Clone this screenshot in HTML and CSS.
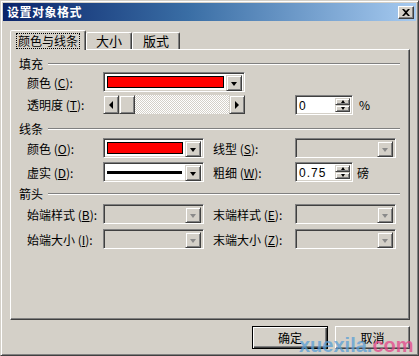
FILE: index.html
```html
<!DOCTYPE html>
<html lang="zh-CN">
<head>
<meta charset="utf-8">
<title>设置对象格式</title>
<link rel="stylesheet" href="styles.css">
</head>
<body>
<div class="dialog">
  <div class="titlebar">
    <span class="title">设置对象格式</span>
    <span class="close">
      <svg width="8" height="7" viewBox="0 0 8 7"><path d="M0 0h2l2 2 2-2h2L5 3.5 8 7H6L4 5 2 7H0l3-3.5z" fill="#000"/></svg>
    </span>
  </div>
  <div class="content">
    <div class="tabs">
      <div class="tab active"><span class="focus">颜色与线条</span></div>
      <div class="tab t2">大小</div>
      <div class="tab t3">版式</div>
    </div>
    <div class="panel">
      <div class="group-head g1"><span>填充</span><i class="rule"></i></div>
      <div class="row r1">
        <span class="lbl">颜色 (<u>C</u>):</span>
        <div class="combo w142"><div class="field"><div class="swatch"></div></div><div class="dbtn"><b class="tri"></b></div></div>
      </div>
      <div class="row r2">
        <span class="lbl">透明度 (<u>T</u>):</span>
        <div class="scroll">
          <div class="sbtn"><b class="tri-l"></b></div>
          <div class="thumb"></div>
          <div class="track"></div>
          <div class="sbtn"><b class="tri-r"></b></div>
        </div>
        <div class="spin sp1"><div class="sval">0</div><div class="sbtns"><div class="ub"><b class="su"></b></div><div class="ub"><b class="sd"></b></div></div></div>
        <span class="unit">%</span>
      </div>

      <div class="group-head g2"><span>线条</span><i class="rule"></i></div>
      <div class="row r3">
        <span class="lbl">颜色 (<u>O</u>):</span>
        <div class="combo w101"><div class="field"><div class="swatch"></div></div><div class="dbtn"><b class="tri"></b></div></div>
        <span class="lbl2">线型 (<u>S</u>):</span>
        <div class="combo w101 dis"><div class="field"></div><div class="dbtn"><b class="tri"></b></div></div>
      </div>
      <div class="row r4">
        <span class="lbl">虚实 (<u>D</u>):</span>
        <div class="combo w101"><div class="field"><div class="linesample"></div></div><div class="dbtn"><b class="tri"></b></div></div>
        <span class="lbl2">粗细 (<u>W</u>):</span>
        <div class="spin"><div class="sval">0.75</div><div class="sbtns"><div class="ub"><b class="su"></b></div><div class="ub"><b class="sd"></b></div></div></div>
        <span class="unit u2">磅</span>
      </div>

      <div class="group-head g3"><span>箭头</span><i class="rule"></i></div>
      <div class="row r5">
        <span class="lbl">始端样式 (<u>B</u>):</span>
        <div class="combo w101 dis"><div class="field"></div><div class="dbtn"><b class="tri"></b></div></div>
        <span class="lbl2">末端样式 (<u>E</u>):</span>
        <div class="combo w101 dis"><div class="field"></div><div class="dbtn"><b class="tri"></b></div></div>
      </div>
      <div class="row r6">
        <span class="lbl">始端大小 (<u>I</u>):</span>
        <div class="combo w101 dis"><div class="field"></div><div class="dbtn"><b class="tri"></b></div></div>
        <span class="lbl2">末端大小 (<u>Z</u>):</span>
        <div class="combo w101 dis"><div class="field"></div><div class="dbtn"><b class="tri"></b></div></div>
      </div>
    </div>
    <div class="buttons">
      <div class="btn default"><span>确定</span></div>
      <div class="btn"><span>取消</span></div>
    </div>
  </div>
  <div class="watermark"><span class="wm-a">xuexila.</span><span class="wm-b">com</span></div>
</div>
</body>
</html>
```
FILE: styles.css
```css
* { box-sizing: border-box; }
html, body { margin: 0; padding: 0; }
body {
  width: 419px; height: 356px; overflow: hidden;
  background: #d4d0c8;
  font-family: "Noto Sans CJK SC", "Liberation Sans", sans-serif;
  font-size: 12px; color: #000;
}
u { text-decoration: underline; text-underline-offset: 1px; }
.dialog {
  position: relative;
  width: 419px; height: 356px;
  background: #d4d0c8;
  border: 1px solid; border-color: #d4d0c8 #404040 #404040 #d4d0c8;
  box-shadow: inset 1px 1px #fff, inset -1px -1px #808080;
  padding: 2px 2px;
}
.titlebar {
  height: 18px;
  background: linear-gradient(to right, #0a246a 0%, #3a6ea5 45%, #a6caf0 100%);
  display: flex; align-items: center; justify-content: space-between;
  padding: 0 2px 0 4px;
}
.title { color: #fff; font-weight: bold; font-size: 12px; line-height: 18px; letter-spacing: 0.5px; }
.close {
  width: 16px; height: 13px; background: #d4d0c8;
  border: 1px solid; border-color: #fff #404040 #404040 #fff;
  box-shadow: inset -1px -1px #808080;
  display: flex; align-items: center; justify-content: center;
}
.content { padding: 9px 0 0 7px; }
.tabs { display: flex; align-items: flex-end; height: 19px; position: relative; z-index: 2; }
.tab {
  height: 17px; padding: 0 6px;
  border: 1px solid; border-bottom: none;
  border-color: #fff #404040 transparent #fff;
  box-shadow: inset -1px 0 #808080;
  border-radius: 2px 2px 0 0;
  display: flex; align-items: center; justify-content: center;
  line-height: 14px; background: #d4d0c8; font-size: 13px;
}
.tab.active { height: 20px; width: 76px; margin-bottom: -1px; font-size: 12px; }
.tab.t2 { width: 46px; }
.tab.t3 { width: 48px; }
.focus { outline: 1px dotted #000; outline-offset: 0; padding: 0 1px; line-height: 14px; }
.panel {
  width: 400px; height: 271px;
  border: 1px solid; border-color: #fff #404040 #404040 #fff;
  box-shadow: inset -1px -1px #808080;
  padding: 7px 0 0 8px;
}
.group-head { display: flex; align-items: center; height: 14px; line-height: 14px; }
.rule { flex: 1; height: 2px; border-top: 1px solid #808080; border-bottom: 1px solid #fff; margin: 0 9px 0 5px; }
.g2 { margin-top: 8px; }
.g3 { margin-top: 5px; }
.row { display: flex; align-items: center; padding-left: 8px; }
.r1 { margin-top: 1px; height: 20px; }
.r2 { margin-top: 3px; height: 19px; }
.r3 { margin-top: 2px; height: 20px; }
.r4 { margin-top: 4px; height: 20px; }
.r5 { margin-top: 3px; height: 20px; }
.r6 { margin-top: 5px; height: 20px; }
.lbl { width: 76px; white-space: nowrap; }
.lbl2 { width: 82px; margin-left: 9px; white-space: nowrap; }
.combo {
  height: 20px; display: flex; padding: 2px;
  background: #fff;
  border: 1px solid; border-color: #808080 #fff #fff #808080;
  box-shadow: inset 1px 1px #404040, inset -1px -1px #d4d0c8;
}
.combo.dis { background: #d4d0c8; }
.w142 { width: 142px; }
.w101 { width: 101px; }
.field { flex: 1; padding: 1px 2px 1px 1px; display: flex; align-items: center; }
.swatch { width: 100%; height: 100%; background: #ff0000; border: 1px solid #000; }
.linesample { width: 100%; height: 3px; background: #000; margin-right: 1px; }
.dbtn {
  width: 16px; height: 16px; background: #d4d0c8;
  border: 1px solid; border-color: #d4d0c8 #404040 #404040 #d4d0c8;
  box-shadow: inset 1px 1px #fff, inset -1px -1px #808080;
  display: flex; align-items: center; justify-content: center;
}
.tri { width: 0; height: 0; border-left: 3.5px solid transparent; border-right: 3.5px solid transparent; border-top: 4px solid #000; margin-top: 1px; }
.dis .tri { border-top-color: #8a8a8a; }
.scroll { width: 142px; height: 19px; display: flex; }
.sbtn, .thumb {
  width: 16px; height: 19px; background: #d4d0c8;
  border: 1px solid; border-color: #d4d0c8 #404040 #404040 #d4d0c8;
  box-shadow: inset 1px 1px #fff, inset -1px -1px #808080;
  display: flex; align-items: center; justify-content: center;
}
.track { flex: 1; background-image: repeating-conic-gradient(#ffffff 0 25%, #d4d0c8 0 50%); background-size: 2px 2px; }
.tri-l { width: 0; height: 0; border-top: 4px solid transparent; border-bottom: 4px solid transparent; border-right: 4px solid #000; }
.tri-r { width: 0; height: 0; border-top: 4px solid transparent; border-bottom: 4px solid transparent; border-left: 4px solid #000; }
.spin {
  width: 58px; height: 20px; display: flex; background: #fff; padding: 2px;
  border: 1px solid; border-color: #808080 #fff #fff #808080;
  box-shadow: inset 1px 1px #404040, inset -1px -1px #d4d0c8;
}
.sp1 { margin-left: 50px; }
.sval { flex: 1; line-height: 16px; padding-left: 1px; font-family: "Liberation Sans", sans-serif; font-size: 12px; letter-spacing: 1px; }
.sbtns { width: 15px; display: flex; flex-direction: column; }
.ub {
  flex: 1; background: #d4d0c8;
  border: 1px solid; border-color: #d4d0c8 #404040 #404040 #d4d0c8;
  box-shadow: inset 1px 1px #fff, inset -1px -1px #808080;
  display: flex; align-items: center; justify-content: center;
}
.su { width: 0; height: 0; border-left: 2.5px solid transparent; border-right: 2.5px solid transparent; border-bottom: 3px solid #000; }
.sd { width: 0; height: 0; border-left: 2.5px solid transparent; border-right: 2.5px solid transparent; border-top: 3px solid #000; }
.unit { margin-left: 6px; }
.u2 { margin-left: 4px; }
.buttons { display: flex; justify-content: flex-end; gap: 7px; width: 400px; margin-top: 6px; }
.btn {
  width: 75px; height: 23px; background: #d4d0c8;
  border: 1px solid; border-color: #fff #404040 #404040 #fff;
  box-shadow: inset -1px -1px #808080;
  display: flex; align-items: center; justify-content: center;
}
.btn.default { width: 76px; border: 1px solid #000; box-shadow: inset 1px 1px #fff, inset -1px -1px #404040, inset -2px -2px #808080; }
.watermark {
  position: absolute; left: 298px; top: 334px;
  font-family: "Liberation Sans", sans-serif; font-weight: bold; font-size: 20px; line-height: 20px;
  opacity: 0.75; pointer-events: none;
}
.wm-a { color: #5b9fd6; }
.wm-b { color: #e5468a; }
```
